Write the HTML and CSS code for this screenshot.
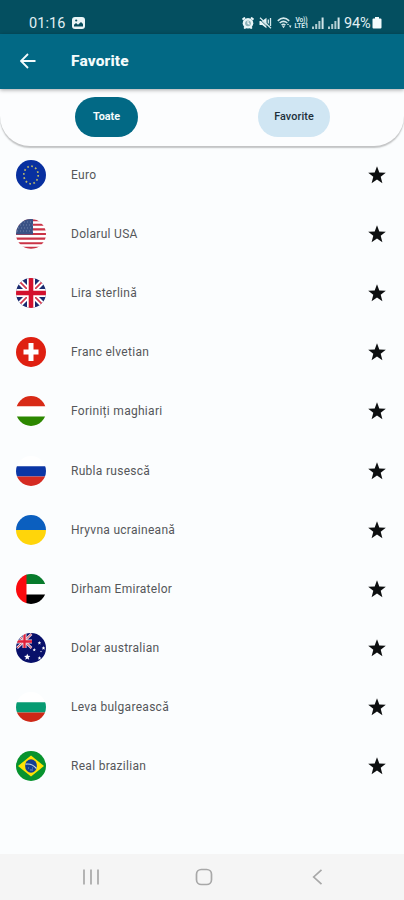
FILE: index.html
```html
<!DOCTYPE html>
<html lang="ro">
<head>
<meta charset="utf-8">
<title>Favorite</title>
<link rel="stylesheet" href="styles.css">
</head>
<body>
<svg class="defs" aria-hidden="true">
  <defs>
    <clipPath id="disc"><circle cx="15" cy="15" r="15"/></clipPath>
    <symbol id="star" viewBox="0 0 18 18"><path d="M9 .3 11.3 6.5 17.8 6.7 12.7 10.8 14.4 17.2 9 13.6 3.6 17.2 5.3 10.8 .2 6.7 6.7 6.5Z"/></symbol>
    <symbol id="signal" viewBox="0 0 12 12"><path d="M0 9.5h2V12H0zM3.2 7h2v5h-2zM6.4 4h2v8h-2z" opacity=".75"/><path d="M9.6 .5h2V12h-2z" opacity=".9"/></symbol>
  </defs>
</svg>
<div class="screen">
  <div class="status">
    <span class="clock">01:16</span>
    <svg class="picture" width="13" height="12" viewBox="0 0 13 12"><rect width="13" height="12" rx="3" fill="#e9f5f7"/><path d="M2 9.5V7.8l2-1.7 2 1.6 3-2.7 2 2v2.5z" fill="#064c5c"/><circle cx="4.2" cy="3.5" r="1.1" fill="#064c5c"/></svg>
    <div class="indicators">
      <svg class="alarm" width="12" height="12" viewBox="0 0 12 12"><path d="M.5 2.7 3 .6M11.500 2.700 9 .6M2.300 11.700 3.500 10M9.700 11.700 8.500 10" stroke="#e9f5f7" stroke-width="2"/><circle cx="6" cy="6.300" r="5.300" fill="#e9f5f7"/><circle cx="6" cy="6.300" r="2.900" fill="#8db2b9"/><path d="M6 4v2.500l1.600 .8" fill="none" stroke="#fff" stroke-width="1.100"/></svg>
      <svg class="mute" width="13" height="12" viewBox="0 0 13 12"><path d="M.5 4h2.700L7.500 .8v10.400L3.200 8H.5z" fill="#e9f5f7"/><path d="M1 .8 12 11.300M9.300 2.500v4M11.500 1v8" stroke="#d4e8eb" stroke-width="1.300" fill="none"/><path d="M.5 2.200 9 10.500" stroke="#064c5c" stroke-width=".8"/></svg>
      <svg class="wifi" width="15" height="12" viewBox="0 0 15 12"><path d="M.8 3.800Q6.500-1.500 12.200 3.800M2.700 6Q6.500 2.600 10.300 6M4.600 8.200Q6.500 6.500 8.400 8.200" fill="none" stroke="#d4e8eb" stroke-width="1.600"/><path d="M5 9.300h3L6.500 11z" fill="#fff"/><path d="M10 8h2L11 6.500zM12 8.500h2.500L13.200 11z" fill="#e9f5f7"/></svg>
      <svg class="volte" width="16" height="13" viewBox="0 0 16 13"><text x="1.500" y="5.800" textLength="12">Vo))</text><text x=".5" y="12.200" textLength="14">LTE1</text></svg>
      <svg class="signal" width="12" height="12"><use href="#signal"/></svg>
      <svg class="signal second" width="12" height="12"><use href="#signal"/></svg>
      <span class="percent">94%</span>
      <svg class="battery" width="10" height="12" viewBox="0 0 10 12"><path d="M3 0h4v1.500h1.500Q9.500 1.500 9.500 2.500v8q0 1-1 1h-7q-1 0-1-1v-8q0-1 1-1H3z"/></svg>
    </div>
  </div>
  <header class="appbar">
    <svg width="16" height="16" viewBox="0 0 16 16"><path d="M15.500 8H1.500M8 1 1 8l7 7" fill="none" stroke="#f4fbfc" stroke-width="1.800"/></svg>
    <h1>Favorite</h1>
  </header>
  <nav class="tabs">
    <div class="tab"><button class="pill active">Toate</button></div>
    <div class="tab"><button class="pill">Favorite</button></div>
  </nav>
  <ul class="currencies">
    <li>
      <svg class="flag" viewBox="0 0 30 30"><circle cx="15" cy="15" r="15" fill="#0830a0"/><ellipse cx="15" cy="15" rx="7.200" ry="8.800" fill="none" stroke="#b9b66c" stroke-width="1.700" stroke-dasharray="1.700 2.500"/></svg>
      <span>Euro</span><svg class="star"><use href="#star"/></svg>
    </li>
    <li>
      <svg class="flag" viewBox="0 0 30 30"><g clip-path="url(#disc)"><path fill="#fff" d="M0 0h30v30H0z"/><path d="M0 1.200h30M0 5.800h30M0 10.400h30M0 15h30M0 19.600h30M0 24.200h30M0 28.800h30" stroke="#ca3447" stroke-width="2.100"/><path fill="#3a5285" d="M0 0h17v15.500H0z"/><path d="M2 3h15M1 6h16M2 9h15M1 12h16" stroke="#7f90b3" stroke-width=".8" stroke-dasharray="1 2"/></g></svg>
      <span>Dolarul USA</span><svg class="star"><use href="#star"/></svg>
    </li>
    <li>
      <svg class="flag" viewBox="0 0 30 30"><g clip-path="url(#disc)"><path fill="#1a2b70" d="M0 0h30v30H0z"/><path d="M0 0 30 30M30 0 0 30" stroke="#fff" stroke-width="5.500"/><path d="M0 0 30 30M30 0 0 30" stroke="#d33b50" stroke-width="1.700"/><path d="M15 0v30M0 15h30" stroke="#fff" stroke-width="8"/><path d="M15 0v30M0 15h30" stroke="#d3112d" stroke-width="4.600"/></g></svg>
      <span>Lira sterlină</span><svg class="star"><use href="#star"/></svg>
    </li>
    <li>
      <svg class="flag" viewBox="0 0 30 30"><circle cx="15" cy="15" r="15" fill="#df2011"/><path d="M15 6v18M7.500 15h15" stroke="#fff" stroke-width="5"/></svg>
      <span>Franc elvetian</span><svg class="star"><use href="#star"/></svg>
    </li>
    <li>
      <svg class="flag" viewBox="0 0 30 30"><g clip-path="url(#disc)"><path fill="#fff" d="M0 0h30v30H0z"/><path fill="#d82a16" d="M0 0h30v10.300H0z"/><path fill="#2d8800" d="M0 20.500h30V30H0z"/></g></svg>
      <span>Foriniți maghiari</span><svg class="star"><use href="#star"/></svg>
    </li>
    <li>
      <svg class="flag" viewBox="0 0 30 30"><g clip-path="url(#disc)"><path fill="#fff" d="M0 0h30v30H0z"/><path fill="#0b36a5" d="M0 10.300h30v10.200H0z"/><path fill="#d52b22" d="M0 20.500h30V30H0z"/></g></svg>
      <span>Rubla rusescă</span><svg class="star"><use href="#star"/></svg>
    </li>
    <li>
      <svg class="flag" viewBox="0 0 30 30"><g clip-path="url(#disc)"><path fill="#0b5fbf" d="M0 0h30v15H0z"/><path fill="#ffd50a" d="M0 15h30v15H0z"/></g></svg>
      <span>Hryvna ucraineană</span><svg class="star"><use href="#star"/></svg>
    </li>
    <li>
      <svg class="flag" viewBox="0 0 30 30"><g clip-path="url(#disc)"><path fill="#fff" d="M0 0h30v30H0z"/><path fill="#087b2c" d="M10 0h20v10H10z"/><path fill="#000" d="M10 20.500h20V30H10z"/><path fill="#fb0a0e" d="M0 0h10.500v30H0z"/></g></svg>
      <span>Dirham Emiratelor</span><svg class="star"><use href="#star"/></svg>
    </li>
    <li>
      <svg class="flag" viewBox="0 0 30 30"><g clip-path="url(#disc)"><path fill="#08106a" d="M0 0h30v30H0z"/><path d="M0 0 15.500 15M15.500 1 1 15" stroke="#e8d8e3" stroke-width="2.500"/><path d="M0 0 15.500 15M15.500 1 1 15" stroke="#d83b50" stroke-width="1"/><path d="M8.500 0v15M0 8.500h16" stroke="#f3e0e8" stroke-width="4"/><path d="M8.500 0v15M0 8.500h16" stroke="#df2039" stroke-width="2.300"/></g><g fill="#fff"><use href="#star" x="8" y="20.500" width="6.500" height="6.500"/><use href="#star" x="21.500" y="8" width="3.800" height="3.800"/><use href="#star" x="16.500" y="15" width="3.500" height="3.500"/><use href="#star" x="25.500" y="13" width="4" height="4"/><use href="#star" x="21.500" y="23" width="4" height="4"/><use href="#star" x="24" y="17.500" width="2" height="2"/></g></svg>
      <span>Dolar australian</span><svg class="star"><use href="#star"/></svg>
    </li>
    <li>
      <svg class="flag" viewBox="0 0 30 30"><g clip-path="url(#disc)"><path fill="#fff" d="M0 0h30v30H0z"/><path fill="#079b72" d="M0 10.300h30v10.200H0z"/><path fill="#ce2817" d="M0 20.500h30V30H0z"/></g></svg>
      <span>Leva bulgarească</span><svg class="star"><use href="#star"/></svg>
    </li>
    <li>
      <svg class="flag" viewBox="0 0 30 30"><circle cx="15" cy="15" r="15" fill="#07932e"/><path d="M15 4.500 28 15 15 25.500 2 15z" fill="#ffe205"/><ellipse cx="15" cy="15" rx="5.900" ry="6.800" fill="#133f92"/><path d="M9.500 13.200Q16 12 20.500 17.500" fill="none" stroke="#c5d7e5" stroke-width="1.200"/><path d="M12 17h1M14 19h3M16 17h1" stroke="#8eaac9" stroke-width=".8"/></svg>
      <span>Real brazilian</span><svg class="star"><use href="#star"/></svg>
    </li>
  </ul>
  <footer class="system-nav">
    <svg width="16" height="16" viewBox="0 0 16 16"><path d="M1 .5v15M8 .5v15M15 .5v15"/></svg>
    <svg width="18" height="18" viewBox="0 0 18 18"><rect x="1.500" y="1.500" width="15" height="15" rx="4.800"/></svg>
    <svg width="16" height="16" viewBox="0 0 16 16"><path d="M12.500 .8 4.700 8l7.800 7.200"/></svg>
  </footer>
</div>
</body>
</html>
```
FILE: styles.css
```css
* { box-sizing: border-box; }
body { margin: 0; font-family: Roboto, sans-serif; background: #fbfdfe; }
svg { display: block; flex: none; }
.defs { position: absolute; width: 0; height: 0; }
.screen { width: 404px; height: 900px; display: flex; flex-direction: column; overflow: hidden; }

.status { height: 34px; flex: none; display: flex; align-items: flex-start; padding: 16px 22px 0 29px; background: #044f60; color: #e2f0f3; }
.clock { font-size: 14.5px; line-height: 16px; width: 38px; letter-spacing: .1px; }
.picture { margin: 1px 0 0 5px; }
.indicators { display: flex; margin-left: auto; padding-top: 1px; }
.mute { margin-left: 5px; }
.wifi { margin-left: 5px; }
.volte { margin-left: 2px; margin-top: -1px; fill: #d4e8eb; font-size: 6.5px; font-weight: 700; }
.signal { margin-left: 2px; fill: #e9f5f7; }
.second { margin-left: 4px; }
.percent { font-size: 14.5px; line-height: 16px; margin: -1px 0 0 4px; width: 28px; letter-spacing: -.2px; }
.battery { fill: #f4fbfc; }

.appbar { position: relative; z-index: 2; height: 54.5px; flex: none; display: flex; align-items: center; padding-left: 20px; gap: 35px; background: #026985; color: #f4fbfc; box-shadow: 0 1px 4px rgba(0, 0, 0, .35); }
.appbar h1 { margin: 0; font-size: 15.5px; line-height: 20px; font-weight: 800; letter-spacing: .15px; }

.tabs { height: 57px; flex: none; display: grid; grid-template-columns: 213px 1fr; background: #fcfdfe; border-radius: 0 0 30px 30px; box-shadow: 0 1.5px 1.5px rgba(0, 0, 0, .23); }
.tab { display: flex; justify-content: center; padding-top: 8px; }
.tab + .tab { padding-right: 29px; }
.pill { width: 72px; height: 40px; border: 0; padding: 0; border-radius: 20px; background: #d0e6f3; color: #20303a; font: 500 10.8px Roboto, sans-serif; letter-spacing: .1px; }
.pill.active { width: 63px; background: #026985; color: #f4fbfc; font-weight: 700; letter-spacing: 0; }

.currencies { list-style: none; margin: 0; padding: 0; flex: 1; }
.currencies li { height: 59.1px; display: flex; align-items: center; padding: 0 18px 0 16px; font-size: 12px; color: #55575a; letter-spacing: .29px; }
.currencies span { margin-left: 25px; flex: 1; }
.flag { width: 30px; height: 30px; }
.star { width: 18px; height: 18px; fill: #0d0f10; }

.system-nav { height: 46px; flex: none; display: grid; grid-template-columns: repeat(3, 18px); justify-content: space-between; align-items: center; justify-items: center; padding: 0 78px 0 82px; background: #f5f5f5; }
.system-nav svg { fill: none; stroke: #a8a8a8; stroke-width: 1.7; }
```
